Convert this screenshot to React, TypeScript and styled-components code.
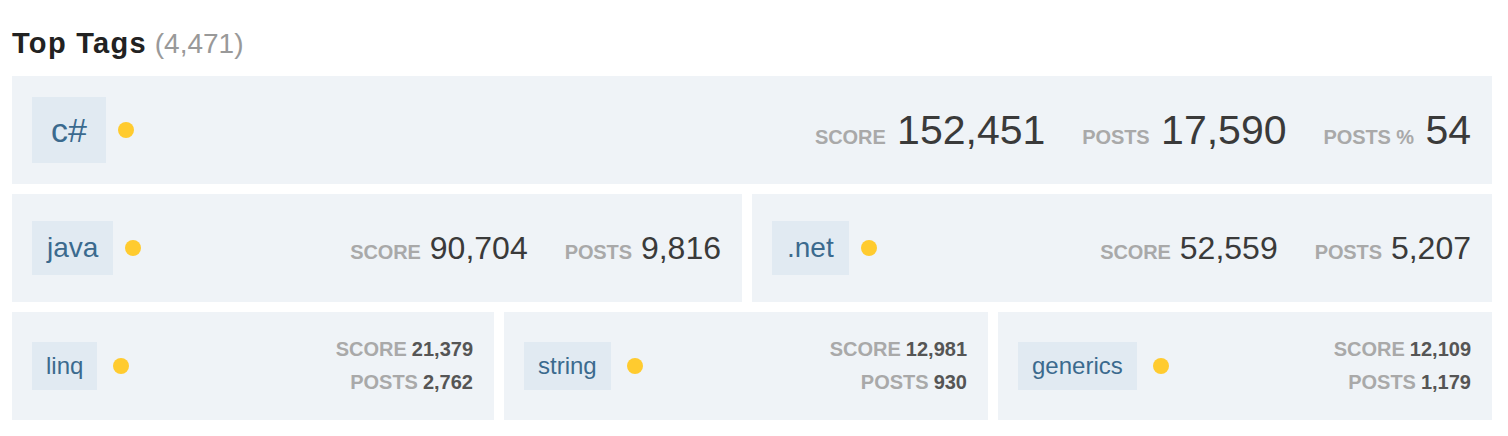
import React from "react";
import styled, { createGlobalStyle } from "styled-components";

const Global = createGlobalStyle`
  html, body { margin: 0; padding: 0; background: #ffffff; }
  body { font-family: "Liberation Sans", Arial, Helvetica, sans-serif; }
`;

type Size = "lg" | "md" | "sm";

const Page = styled.div`
  padding: 26px 16px 16px 12px;
`;

const Title = styled.h2`
  margin: 0 0 16px 0;
  height: 34px;
  font-size: 28px;
  line-height: 34px;
  font-weight: bold;
  color: #222222;
`;

const TitleText = styled.span`
  font-size: 29px;
  letter-spacing: 1.3px;
`;

const Count = styled.span`
  font-weight: normal;
  color: #999999;
`;

const Rows = styled.div`
  display: flex;
  flex-direction: column;
  gap: 10px;
`;

const Row = styled.div<{ $cols: string }>`
  display: grid;
  grid-template-columns: ${(p) => p.$cols};
  gap: 10px;
`;

const Card = styled.div`
  height: 108px;
  box-sizing: border-box;
  background: #eff3f7;
  display: flex;
  align-items: center;
  padding: 0 21px 0 20px;
`;

const tagFont: Record<Size, number> = { lg: 34, md: 28, sm: 24 };
const tagPadV: Record<Size, number> = { lg: 16, md: 13, sm: 12 };
const tagPadH: Record<Size, number> = { lg: 19, md: 15, sm: 14 };

const Tag = styled.a<{ $size: Size }>`
  display: inline-block;
  background: #e1eaf2;
  color: #3b6a8e;
  text-decoration: none;
  font-size: ${(p) => tagFont[p.$size]}px;
  line-height: 1;
  padding: ${(p) => tagPadV[p.$size]}px ${(p) => tagPadH[p.$size]}px;
`;

const Dot = styled.span<{ $gap: number }>`
  width: 16px;
  height: 16px;
  border-radius: 50%;
  background: #ffcb2f;
  margin-left: ${(p) => p.$gap}px;
  flex: none;
`;

const Stats = styled.div`
  margin-left: auto;
  display: flex;
  align-items: baseline;
`;

const Stat = styled.div`
  display: flex;
  align-items: baseline;
  & + & {
    margin-left: 37px;
  }
`;

const Label = styled.span`
  font-size: 20px;
  font-weight: bold;
  color: #a9a9a9;
  text-transform: uppercase;
  letter-spacing: -0.1px;
`;

const Value = styled.span<{ $size: Size }>`
  font-size: ${(p) => (p.$size === "lg" ? 41 : 32)}px;
  color: #3a3a3a;
  margin-left: 0.28em;
`;

const StackStats = styled.div`
  margin-left: auto;
  display: flex;
  flex-direction: column;
  align-items: flex-end;
`;

const StackLine = styled.div`
  display: flex;
  align-items: baseline;
  line-height: 33px;
`;

const SmallLabel = styled.span`
  font-size: 20px;
  font-weight: bold;
  color: #a9a9a9;
`;

const SmallValue = styled.span`
  font-size: 20px;
  font-weight: bold;
  color: #555555;
  margin-left: 5px;
`;

type TagData = { name: string; score: string; posts: string; pct?: string };

const WideCard: React.FC<{ t: TagData; size: Size }> = ({ t, size }) => (
  <Card>
    <Tag $size={size}>{t.name}</Tag>
    <Dot $gap={12} />
    <Stats>
      <Stat>
        <Label>Score</Label>
        <Value $size={size}>{t.score}</Value>
      </Stat>
      <Stat>
        <Label>Posts</Label>
        <Value $size={size}>{t.posts}</Value>
      </Stat>
      {t.pct && (
        <Stat>
          <Label>Posts %</Label>
          <Value $size={size}>{t.pct}</Value>
        </Stat>
      )}
    </Stats>
  </Card>
);

const SmallCard: React.FC<{ t: TagData }> = ({ t }) => (
  <Card>
    <Tag $size="sm">{t.name}</Tag>
    <Dot $gap={16} />
    <StackStats>
      <StackLine>
        <SmallLabel>SCORE</SmallLabel>
        <SmallValue>{t.score}</SmallValue>
      </StackLine>
      <StackLine>
        <SmallLabel>POSTS</SmallLabel>
        <SmallValue>{t.posts}</SmallValue>
      </StackLine>
    </StackStats>
  </Card>
);

export default function App() {
  return (
    <Page>
      <Global />
      <Title>
        <TitleText>Top Tags</TitleText> <Count>(4,471)</Count>
      </Title>
      <Rows>
        <WideCard t={{ name: "c#", score: "152,451", posts: "17,590", pct: "54" }} size="lg" />
        <Row $cols="730fr 740fr">
          <WideCard t={{ name: "java", score: "90,704", posts: "9,816" }} size="md" />
          <WideCard t={{ name: ".net", score: "52,559", posts: "5,207" }} size="md" />
        </Row>
        <Row $cols="482fr 484fr 494fr">
          <SmallCard t={{ name: "linq", score: "21,379", posts: "2,762" }} />
          <SmallCard t={{ name: "string", score: "12,981", posts: "930" }} />
          <SmallCard t={{ name: "generics", score: "12,109", posts: "1,179" }} />
        </Row>
      </Rows>
    </Page>
  );
}
